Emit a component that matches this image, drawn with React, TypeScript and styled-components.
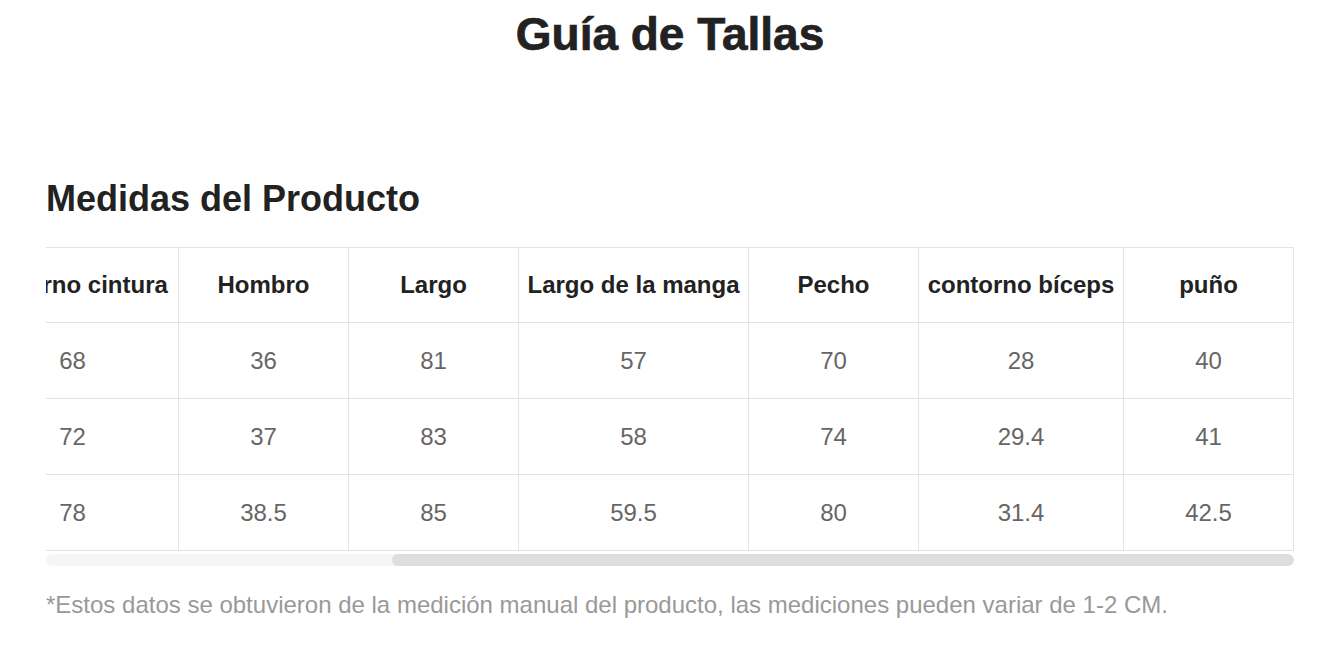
import { useLayoutEffect, useRef, useState } from 'react';
import styled, { createGlobalStyle } from 'styled-components';

const GlobalStyle = createGlobalStyle`
  html, body {
    margin: 0;
    background: #fff;
  }
  body {
    font-family: "Liberation Sans", Arial, Helvetica, sans-serif;
  }
`;

const Page = styled.div`
  padding: 6px 32px 40px 46px;
`;

const Title = styled.h1`
  margin: 0;
  font-size: 46px;
  line-height: 56px;
  font-weight: 700;
  text-align: center;
  color: #222;
  -webkit-text-stroke: 0.7px #222;
`;

const SectionTitle = styled.h2`
  margin: 115px 0 26px;
  font-size: 36px;
  line-height: 44px;
  font-weight: 700;
  color: #222;
`;

const TableScroll = styled.div`
  overflow-x: auto;
  scrollbar-width: none;

  &::-webkit-scrollbar {
    display: none;
  }
`;

const SizeTable = styled.table`
  width: max-content;
  border-collapse: collapse;
`;

const Cell = styled.td<{ $head?: boolean; $w?: number }>`
  width: ${p => p.$w ?? 153}px;
  height: ${p => (p.$head ? 74 : 75)}px;
  padding: 0 8px;
  border: 1px solid #e3e3e3;
  text-align: center;
  white-space: nowrap;
  font-size: 24px;
  font-weight: ${p => (p.$head ? 700 : 400)};
  color: ${p => (p.$head ? '#222' : '#666')};
`;

const Track = styled.div`
  position: relative;
  margin-top: 3px;
  height: 12px;
  border-radius: 6px;
  background: #f5f6f7;
  overflow: hidden;
`;

const Thumb = styled.div`
  position: absolute;
  top: 0;
  bottom: 0;
  border-radius: 6px;
  background: #dedede;
`;

const Note = styled.p`
  margin: 25px 0 0;
  font-size: 24px;
  line-height: 28px;
  color: #999;
`;

const columns = [
  { label: 'Talla', w: 153 },
  { label: 'Largo de pantalón', w: 211 },
  { label: 'contorno cintura', w: 195 },
  { label: 'Hombro', w: 153 },
  { label: 'Largo', w: 153 },
  { label: 'Largo de la manga', w: 213 },
  { label: 'Pecho', w: 153 },
  { label: 'contorno bíceps', w: 188 },
  { label: 'puño', w: 153 },
];

const rows = [
  ['S', '98', '68', '36', '81', '57', '70', '28', '40'],
  ['M', '100', '72', '37', '83', '58', '74', '29.4', '41'],
  ['L', '102', '78', '38.5', '85', '59.5', '80', '31.4', '42.5'],
];

export default function App() {
  const scrollRef = useRef<HTMLDivElement>(null);
  const [thumb, setThumb] = useState({ left: 0, width: 0 });

  function measure() {
    const el = scrollRef.current;
    if (!el) return;
    const ratio = el.clientWidth / el.scrollWidth;
    setThumb({ left: el.scrollLeft * ratio, width: el.clientWidth * ratio });
  }

  useLayoutEffect(() => {
    const el = scrollRef.current;
    if (el) el.scrollLeft = el.scrollWidth;
    measure();
  }, []);

  return (
    <Page>
      <GlobalStyle />
      <Title>Guía de Tallas</Title>
      <SectionTitle>Medidas del Producto</SectionTitle>
      <TableScroll ref={scrollRef} onScroll={measure}>
        <SizeTable>
          <thead>
            <tr>
              {columns.map(c => (
                <Cell as="th" $head $w={c.w} key={c.label}>
                  {c.label}
                </Cell>
              ))}
            </tr>
          </thead>
          <tbody>
            {rows.map(row => (
              <tr key={row[0]}>
                {row.map((v, i) => (
                  <Cell $w={columns[i].w} key={i}>
                    {v}
                  </Cell>
                ))}
              </tr>
            ))}
          </tbody>
        </SizeTable>
      </TableScroll>
      <Track>
        <Thumb style={{ left: thumb.left, width: thumb.width }} />
      </Track>
      <Note>
        *Estos datos se obtuvieron de la medición manual del producto, las mediciones pueden variar de 1-2 CM.
      </Note>
    </Page>
  );
}
